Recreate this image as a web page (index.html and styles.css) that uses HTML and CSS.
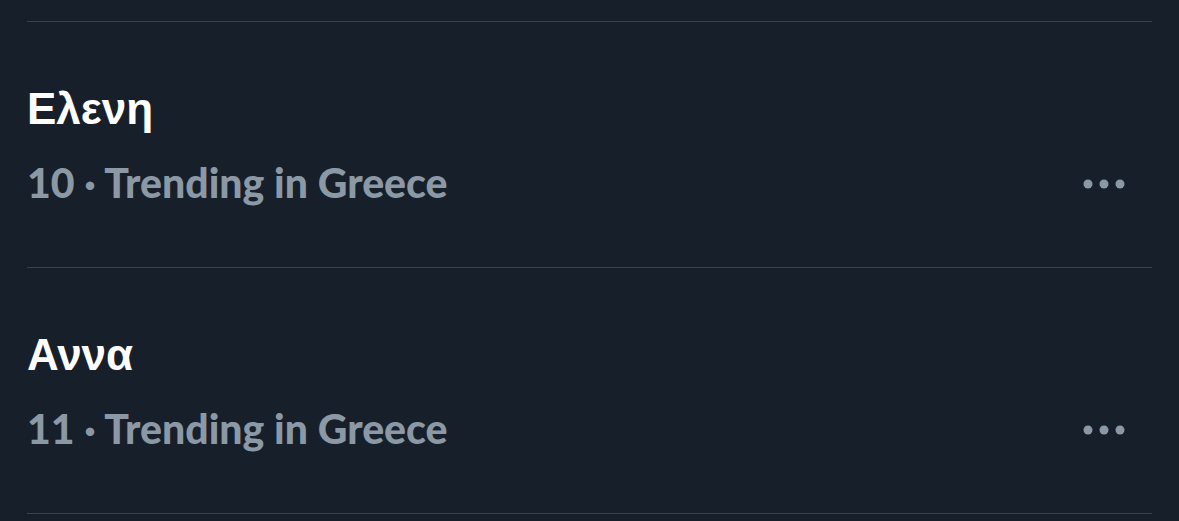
FILE: index.html
```html
<!DOCTYPE html>
<html lang="el">
<head>
<meta charset="utf-8">
<link rel="stylesheet" href="styles.css">
</head>
<body>
<div class="list">
  <div class="trend">
    <div class="title">Ελενη</div>
    <div class="meta">
      <span class="sub">10 · Trending in Greece</span>
      <span class="more"><svg width="42" height="10" viewBox="0 0 42 10"><circle cx="5" cy="5" r="4.5"/><circle cx="21" cy="5" r="4.5"/><circle cx="37" cy="5" r="4.5"/></svg></span>
    </div>
  </div>
  <div class="trend">
    <div class="title">Αννα</div>
    <div class="meta">
      <span class="sub">11 · Trending in Greece</span>
      <span class="more"><svg width="42" height="10" viewBox="0 0 42 10"><circle cx="5" cy="5" r="4.5"/><circle cx="21" cy="5" r="4.5"/><circle cx="37" cy="5" r="4.5"/></svg></span>
    </div>
  </div>
  <div class="end"></div>
</div>
</body>
</html>
```
FILE: styles.css
```css
html, body {
  margin: 0;
  padding: 0;
  background: #171f2a;
  height: 100%;
  overflow: hidden;
}
.list {
  padding: 21px 27px 0 27px;
}
.trend {
  border-top: 1px solid #38424d;
  padding: 62px 0 59px 0;
}
.title {
  font-family: "Liberation Sans", Arial, sans-serif;
  font-weight: 700;
  font-size: 44px;
  line-height: 50px;
  color: #ffffff;
}
.meta {
  margin-top: 24px;
  display: flex;
  align-items: center;
  justify-content: space-between;
  height: 50px;
}
.sub {
  font-family: Lato, sans-serif;
  font-weight: 900;
  font-size: 41px;
  line-height: 50px;
  color: #8b98a5;
}
.more {
  display: flex;
  padding-right: 27px;
  padding-top: 2px;
}
.more svg {
  fill: #8b98a5;
}
.end {
  border-top: 1px solid #38424d;
}
```
